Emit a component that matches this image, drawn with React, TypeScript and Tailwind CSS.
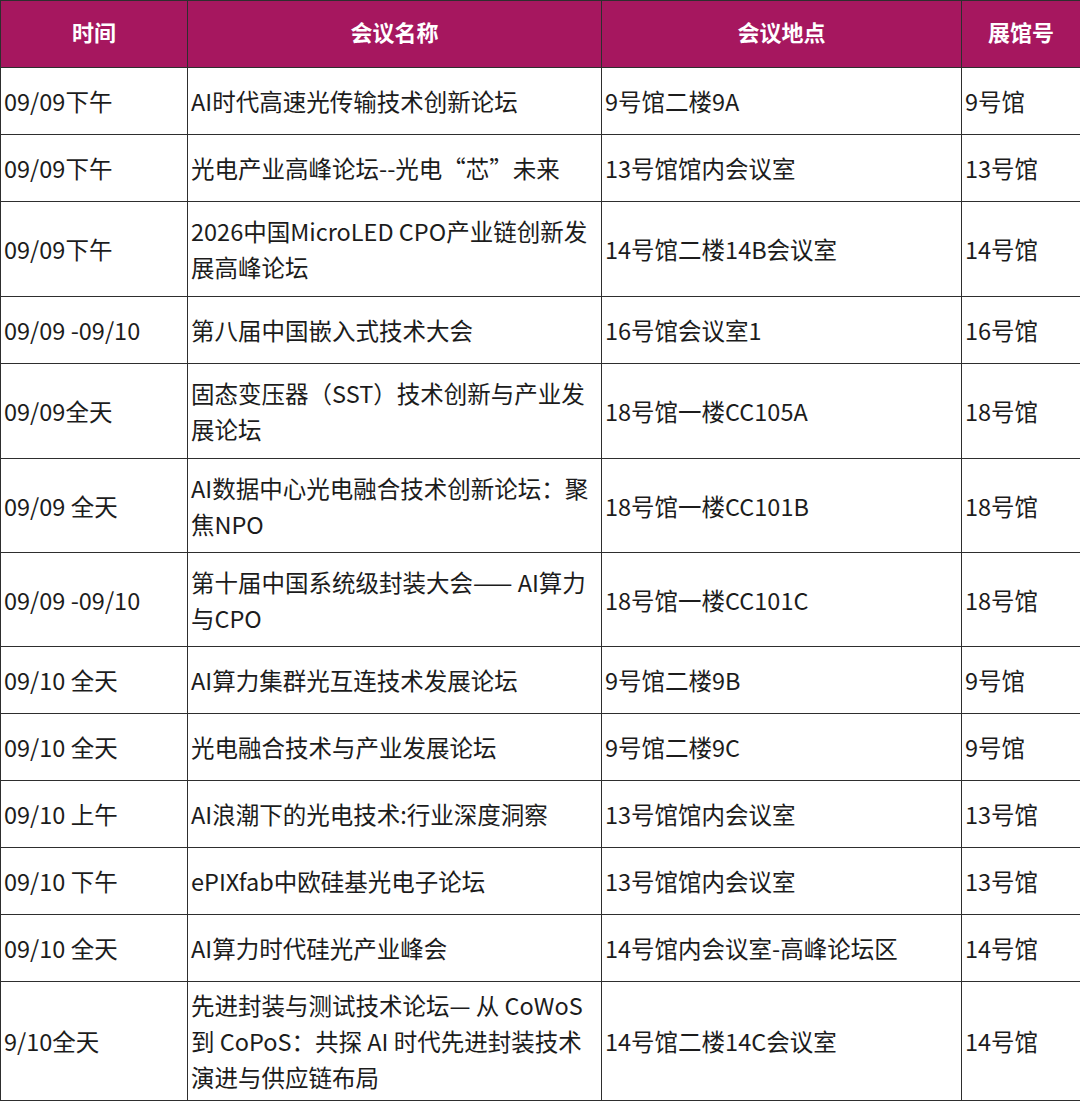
import React from "react";

type Row = { time: string; name: React.ReactNode; place: string; hall: string; h: number };

const rows: Row[] = [
  { time: "09/09下午", name: "AI时代高速光传输技术创新论坛", place: "9号馆二楼9A", hall: "9号馆", h: 67 },
  { time: "09/09下午", name: "光电产业高峰论坛--光电“芯”未来", place: "13号馆馆内会议室", hall: "13号馆", h: 67 },
  { time: "09/09下午", name: (<>2026中国MicroLED CPO产业链创新发<br />展高峰论坛</>), place: "14号馆二楼14B会议室", hall: "14号馆", h: 95 },
  { time: "09/09 -09/10", name: "第八届中国嵌入式技术大会", place: "16号馆会议室1", hall: "16号馆", h: 67 },
  { time: "09/09全天", name: (<>固态变压器（SST）技术创新与产业发<br />展论坛</>), place: "18号馆一楼CC105A", hall: "18号馆", h: 95 },
  { time: "09/09 全天", name: (<>AI数据中心光电融合技术创新论坛：聚<br />焦NPO</>), place: "18号馆一楼CC101B", hall: "18号馆", h: 94 },
  { time: "09/09 -09/10", name: (<>第十届中国系统级封装大会—— AI算力<br />与CPO</>), place: "18号馆一楼CC101C", hall: "18号馆", h: 94 },
  { time: "09/10 全天", name: "AI算力集群光互连技术发展论坛", place: "9号馆二楼9B", hall: "9号馆", h: 67 },
  { time: "09/10 全天", name: "光电融合技术与产业发展论坛", place: "9号馆二楼9C", hall: "9号馆", h: 67 },
  { time: "09/10 上午", name: "AI浪潮下的光电技术:行业深度洞察", place: "13号馆馆内会议室", hall: "13号馆", h: 67 },
  { time: "09/10 下午", name: "ePIXfab中欧硅基光电子论坛", place: "13号馆馆内会议室", hall: "13号馆", h: 67 },
  { time: "09/10 全天", name: "AI算力时代硅光产业峰会", place: "14号馆内会议室-高峰论坛区", hall: "14号馆", h: 67 },
  {
    time: "9/10全天",
    name: (<>先进封装与测试技术论坛— 从 CoWoS<br />到 CoPoS：共探 AI 时代先进封装技术<br />演进与供应链布局</>),
    place: "14号馆二楼14C会议室",
    hall: "14号馆",
    h: 119,
  },
];

const font = { fontFamily: '"Noto Sans CJK SC", "Noto Sans", sans-serif' };

export default function App() {
  return (
    <div className="w-[1080px] bg-white" style={font}>
      <table className="w-[1080px] table-fixed border-collapse">
        <colgroup>
          <col className="w-[187px]" />
          <col className="w-[414px]" />
          <col className="w-[360px]" />
          <col className="w-[119px]" />
        </colgroup>
        <thead>
          <tr className="h-[67px] bg-[#a6175f] text-white">
            <th className="border-[1.5px] border-[#2e2e2e] pb-[6px] text-center align-middle text-[22px] font-bold">时间</th>
            <th className="border-[1.5px] border-[#2e2e2e] pb-[6px] text-center align-middle text-[22px] font-bold">会议名称</th>
            <th className="border-[1.5px] border-[#2e2e2e] pb-[6px] text-center align-middle text-[22px] font-bold">会议地点</th>
            <th className="border-[1.5px] border-[#2e2e2e] pb-[6px] text-center align-middle text-[22px] font-bold">展馆号</th>
          </tr>
        </thead>
        <tbody className="text-[23.5px] leading-[36px] text-[#1c1c1c]">
          {rows.map((r, i) => (
            <tr key={i} style={{ height: r.h }}>
              <td className="border-[1.5px] border-[#2e2e2e] pl-[3px] align-middle whitespace-nowrap">{r.time}</td>
              <td className="border-[1.5px] border-[#2e2e2e] pl-[3px] align-middle whitespace-nowrap">{r.name}</td>
              <td className="border-[1.5px] border-[#2e2e2e] pl-[3px] align-middle whitespace-nowrap">{r.place}</td>
              <td className="border-[1.5px] border-[#2e2e2e] pl-[3px] align-middle whitespace-nowrap">{r.hall}</td>
            </tr>
          ))}
        </tbody>
      </table>
    </div>
  );
}
